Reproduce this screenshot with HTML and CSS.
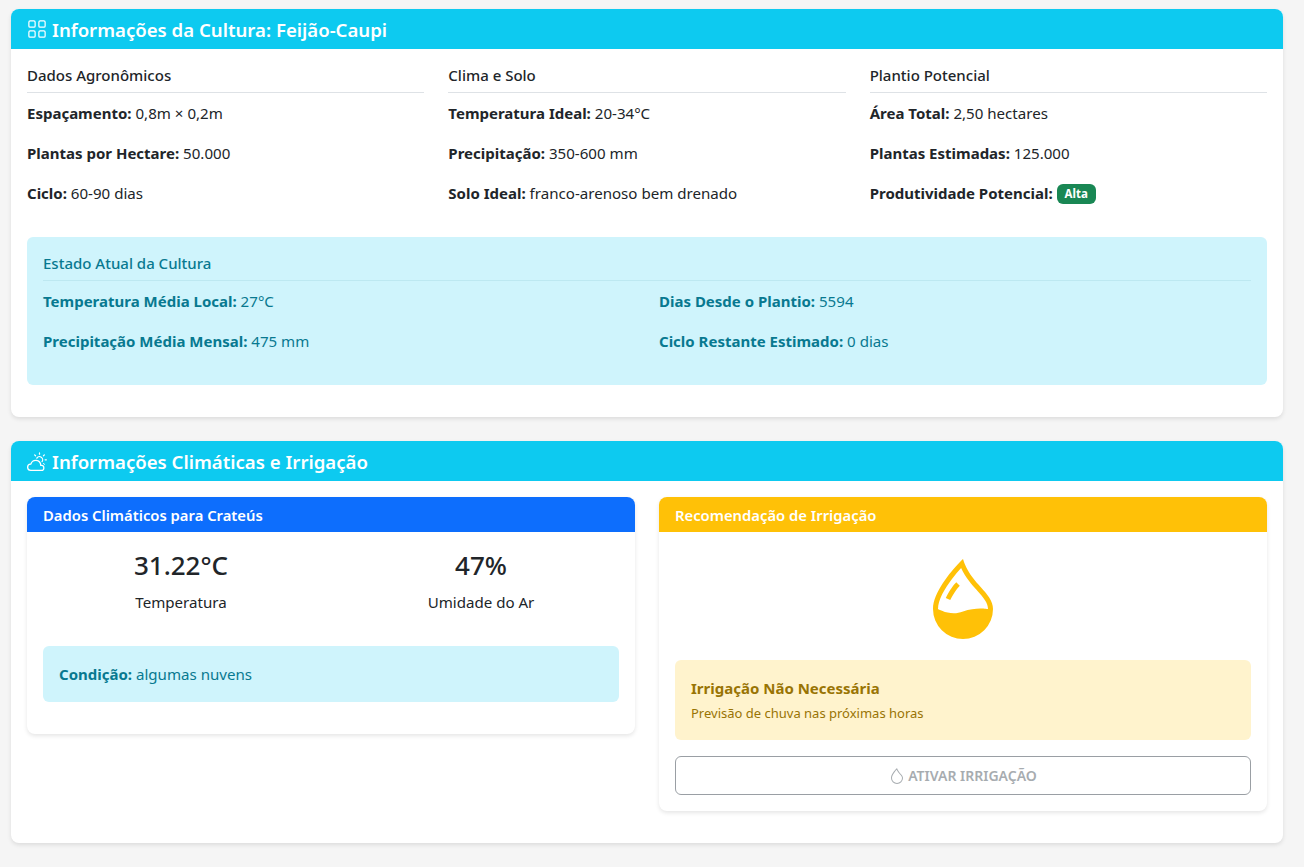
FILE: index.html
```html
<!DOCTYPE html>
<html lang="pt-BR">
<head>
	<title>Informações da Cultura</title>
	<meta charset="utf-8">
	<link rel="stylesheet" href="styles.css">
</head>
<body>
	<section class="card">
		<h5 class="card-header bg-info">
			<svg class="icon" viewBox="0 0 16 16"><path d="M1 2.5A1.5 1.5 0 0 1 2.5 1h3A1.5 1.5 0 0 1 7 2.5v3A1.5 1.5 0 0 1 5.5 7h-3A1.5 1.5 0 0 1 1 5.5zM2.5 2a.5.5 0 0 0-.5.5v3a.5.5 0 0 0 .5.5h3a.5.5 0 0 0 .5-.5v-3a.5.5 0 0 0-.5-.5zm6.5.5A1.5 1.5 0 0 1 10.5 1h3A1.5 1.5 0 0 1 15 2.5v3A1.5 1.5 0 0 1 13.5 7h-3A1.5 1.5 0 0 1 9 5.5zm1.5-.5a.5.5 0 0 0-.5.5v3a.5.5 0 0 0 .5.5h3a.5.5 0 0 0 .5-.5v-3a.5.5 0 0 0-.5-.5zM1 10.5A1.5 1.5 0 0 1 2.5 9h3A1.5 1.5 0 0 1 7 10.5v3A1.5 1.5 0 0 1 5.5 15h-3A1.5 1.5 0 0 1 1 13.5zm1.5-.5a.5.5 0 0 0-.5.5v3a.5.5 0 0 0 .5.5h3a.5.5 0 0 0 .5-.5v-3a.5.5 0 0 0-.5-.5zm6.5.5A1.5 1.5 0 0 1 10.5 9h3a1.5 1.5 0 0 1 1.5 1.5v3a1.5 1.5 0 0 1-1.5 1.5h-3A1.5 1.5 0 0 1 9 13.5zm1.5-.5a.5.5 0 0 0-.5.5v3a.5.5 0 0 0 .5.5h3a.5.5 0 0 0 .5-.5v-3a.5.5 0 0 0-.5-.5z"/></svg>
			Informações da Cultura: Feijão-Caupi
		</h5>
		<div class="card-body">
			<div class="row-3">
				<div>
					<h6 class="section-title">Dados Agronômicos</h6>
					<p><strong>Espaçamento:</strong> 0,8m × 0,2m</p>
					<p><strong>Plantas por Hectare:</strong> 50.000</p>
					<p><strong>Ciclo:</strong> 60-90 dias</p>
				</div>
				<div>
					<h6 class="section-title">Clima e Solo</h6>
					<p><strong>Temperatura Ideal:</strong> 20-34°C</p>
					<p><strong>Precipitação:</strong> 350-600 mm</p>
					<p><strong>Solo Ideal:</strong> franco-arenoso bem drenado</p>
				</div>
				<div>
					<h6 class="section-title">Plantio Potencial</h6>
					<p><strong>Área Total:</strong> 2,50 hectares</p>
					<p><strong>Plantas Estimadas:</strong> 125.000</p>
					<p><strong>Produtividade Potencial:</strong> <span class="badge">Alta</span></p>
				</div>
			</div>
			<div class="alert alert-info">
				<h6 class="section-title">Estado Atual da Cultura</h6>
				<div class="row-2">
					<div>
						<p><strong>Temperatura Média Local:</strong> 27°C</p>
						<p><strong>Precipitação Média Mensal:</strong> 475 mm</p>
					</div>
					<div>
						<p><strong>Dias Desde o Plantio:</strong> 5594</p>
						<p><strong>Ciclo Restante Estimado:</strong> 0 dias</p>
					</div>
				</div>
			</div>
		</div>
	</section>

	<section class="card">
		<h5 class="card-header bg-info">
			<svg class="icon" viewBox="0 0 16 16"><path d="M7 8a3.5 3.5 0 0 1 3.5 3.555.5.5 0 0 0 .624.492A1.503 1.503 0 0 1 13 13.5a1.5 1.5 0 0 1-1.5 1.5H3a2 2 0 1 1 .1-3.998.5.5 0 0 0 .51-.375A3.5 3.5 0 0 1 7 8m4.473 3a4.5 4.5 0 0 0-8.72-.99A3 3 0 0 0 3 16h8.5a2.5 2.5 0 0 0 0-5z"/><path d="M10.5 1.5a.5.5 0 0 0-1 0v1a.5.5 0 0 0 1 0zm3.743 1.964a.5.5 0 1 0-.707-.707l-.708.707a.5.5 0 0 0 .708.708zm-7.779-.707a.5.5 0 0 0-.707.707l.707.708a.5.5 0 1 0 .708-.708zm1.734 3.374a2 2 0 1 1 3.296 2.198q.3.423.516.898a3 3 0 1 0-4.84-3.225q.529.017 1.028.129m4.484 4.074c.6.215 1.125.59 1.522 1.072a.5.5 0 0 0 .039-.742l-.707-.707a.5.5 0 0 0-.854.377M14.5 6.5a.5.5 0 0 0 0 1h1a.5.5 0 0 0 0-1z"/></svg>
			Informações Climáticas e Irrigação
		</h5>
		<div class="card-body">
			<div class="row-2 top">
				<div class="card inner">
					<h6 class="card-header bg-primary">Dados Climáticos para Crateús</h6>
					<div class="card-body">
						<div class="row-2 stats">
							<div class="stat">
								<h3>31.22°C</h3>
								<p>Temperatura</p>
							</div>
							<div class="stat">
								<h3>47%</h3>
								<p>Umidade do Ar</p>
							</div>
						</div>
						<div class="alert alert-info">
							<strong>Condição:</strong> algumas nuvens
						</div>
					</div>
				</div>
				<div class="card inner">
					<h6 class="card-header bg-warning">Recomendação de Irrigação</h6>
					<div class="card-body">
						<div class="drop">
							<svg viewBox="0 0 16 16"><path d="M7.21.8C7.69.295 8 0 8 0q.164.544.371 1.038c.812 1.946 2.073 3.35 3.197 4.6C12.878 7.096 14 8.345 14 10a6 6 0 0 1-12 0C2 6.668 5.58 2.517 7.21.8m.413 1.021A31 31 0 0 0 5.794 3.99c-.726.95-1.436 2.008-1.96 3.07C3.304 8.133 3 9.138 3 10c0 0 2.5 1.5 5 .5s5-.5 5-.5c0-1.201-.796-2.157-2.181-3.7l-.03-.032C9.75 5.11 8.5 3.72 7.623 1.82z"/><path d="M4.553 7.776c.82-1.641 1.717-2.753 2.093-3.13l.708.708c-.29.29-1.128 1.311-1.907 2.87z"/></svg>
						</div>
						<div class="alert alert-warning">
							<h6>Irrigação Não Necessária</h6>
							<small>Previsão de chuva nas próximas horas</small>
						</div>
						<button class="btn" disabled>
							<svg viewBox="0 0 16 16"><path d="M7.21.8C7.69.295 8 0 8 0q.164.544.371 1.038c.812 1.946 2.073 3.35 3.197 4.6C12.878 7.096 14 8.345 14 10a6 6 0 0 1-12 0C2 6.668 5.58 2.517 7.21.8m.413 1.021A31 31 0 0 0 5.794 3.99c-.726.95-1.436 2.008-1.96 3.07C3.304 8.133 3 9.138 3 10a5 5 0 0 0 10 0c0-1.201-.796-2.157-2.181-3.7l-.03-.032C9.75 5.11 8.5 3.72 7.623 1.82z"/></svg>
							ATIVAR IRRIGAÇÃO
						</button>
					</div>
				</div>
			</div>
		</div>
	</section>
</body>
</html>
```

FILE: styles.css
```css
*, *:before, *:after {
	box-sizing: border-box;
}

body {
	margin: 0;
	padding: 9px 21px 24px 11px;
	background: #f5f5f5;
	font-family: 'Noto Sans', sans-serif;
	font-size: 15.1px;
	line-height: 24px;
	color: #212529;
}

h3, h5, h6, p {
	margin: 0;
}

.card {
	background: #fff;
	border-radius: 8px;
	box-shadow: 0 2px 4px rgba(0,0,0,0.1);
	overflow: hidden;
}

.card + .card {
	margin-top: 24px;
}

.row-2 .card + .card {
	margin-top: 0;
}

.card-header {
	padding: 8px 16px;
	color: #fff;
	font-weight: 600;
}

h5.card-header {
	display: flex;
	align-items: center;
	gap: 5px;
	height: 40px;
	padding-top: 10px;
	padding-bottom: 8px;
	font-size: 18.6px;
}

h6.card-header {
	height: 35px;
	padding-top: 9px;
	font-size: 14.8px;
	line-height: 19px;
}

.bg-info {
	background: #0dcaf0;
}

.bg-primary {
	background: #0d6efd;
}

.bg-warning {
	background: #ffc107;
}

.icon {
	width: 20px;
	height: 20px;
	margin-top: -2px;
	fill: currentColor;
}

.card-body {
	padding: 16px;
}

.row-3 {
	display: grid;
	grid-template-columns: repeat(3, 1fr);
	gap: 24px;
	margin-bottom: 16px;
}

.row-2 {
	display: grid;
	grid-template-columns: repeat(2, 1fr);
	gap: 24px;
}

.row-2.top {
	align-items: start;
	margin-bottom: 16px;
}

.section-title {
	height: 28px;
	margin-bottom: 8px;
	padding-top: 1px;
	border-bottom: 1px solid #dee2e6;
	font-size: 15px;
	font-weight: 500;
	line-height: 19px;
}

p {
	margin-bottom: 16px;
}

strong {
	font-size: 15px;
	font-weight: 700;
}

.badge {
	display: inline-block;
	padding: 3px 8px;
	border-radius: 6px;
	background: #198754;
	color: #fff;
	font-size: 11.5px;
	font-weight: 700;
	line-height: 14px;
	vertical-align: 1px;
}

.alert {
	margin-bottom: 16px;
	padding: 16px;
	border-radius: 6px;
}

.alert-info {
	background: #cff4fc;
	color: #087990;
}

.alert-info .section-title {
	border-bottom-color: #bde8f1;
}

.alert-warning {
	background: #fff3cd;
	color: #997404;
}

.alert-warning h6 {
	margin: 3px 0 5px;
	font-size: 15px;
	font-weight: 700;
	line-height: 19px;
}

.alert-warning small {
	display: block;
	font-size: 13px;
	line-height: 21px;
}

.stats {
	margin-bottom: 16px;
	gap: 24px;
}

.stat {
	text-align: center;
}

.stat h3 {
	margin-bottom: 8px;
	font-size: 26px;
	font-weight: 500;
	line-height: 34px;
}

.drop {
	height: 112px;
	padding-top: 11px;
	text-align: center;
}

.drop svg {
	width: 80px;
	height: 80px;
	fill: #ffc107;
}

.btn {
	display: flex;
	justify-content: center;
	align-items: center;
	gap: 3px;
	width: 100%;
	height: 39px;
	background: transparent;
	border: 1px solid #9a9fa4;
	border-radius: 6px;
	color: #a7acb0;
	font-family: inherit;
	font-size: 14px;
	font-weight: 600;
}

.btn svg {
	width: 16px;
	height: 16px;
	fill: currentColor;
}
```
